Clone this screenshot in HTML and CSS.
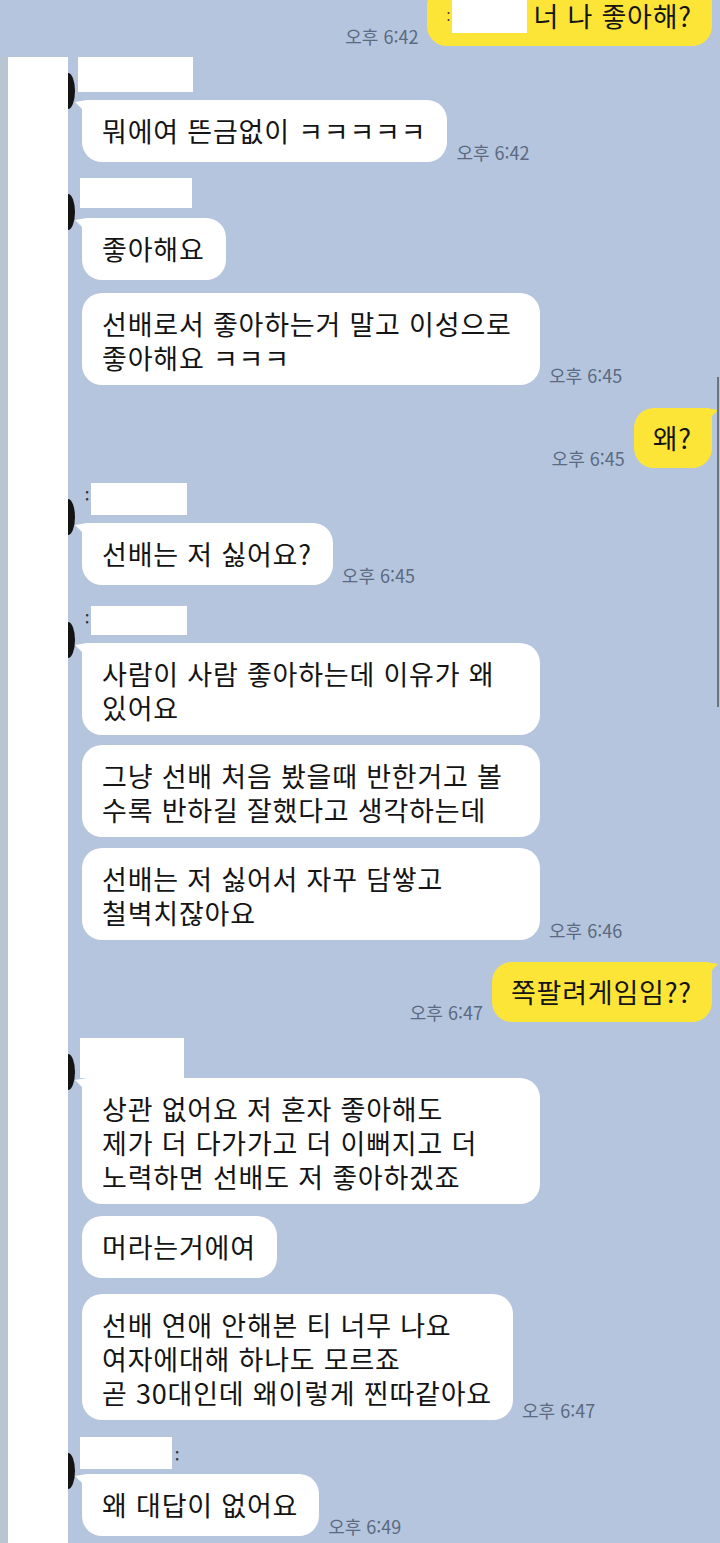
FILE: index.html
```html
<!DOCTYPE html>
<html lang="ko">
<head>
<meta charset="utf-8">
<title>chat</title>
<link rel="stylesheet" href="styles.css">
</head>
<body>
<div class="screen">
  <div class="row right top">
    <span class="time">오후 6:42</span>
    <div class="bubble me tail-r"><span class="ydots">:</span><span class="censor"></span>너 나 좋아해?</div>
  </div>

  <div class="chat">
    <div class="edge"></div>
    <div class="strip"></div>
    <div class="msgs">
      <div class="name n1"><span class="box w115 h35"></span></div>
      <div class="row mt8">
        <div class="bubble tail">뭐에여 뜬금없이 ㅋㅋㅋㅋㅋ</div>
        <span class="time">오후 6:42</span>
      </div>

      <div class="name mt16"><span class="box w112 h30"></span></div>
      <div class="row mt10">
        <div class="bubble tail">좋아해요</div>
      </div>
      <div class="row mt13">
        <div class="bubble wide">선배로서 좋아하는거 말고 이성으로<br>좋아해요 ㅋㅋㅋ</div>
        <span class="time">오후 6:45</span>
      </div>

      <div class="row right mt23">
        <span class="time">오후 6:45</span>
        <div class="bubble me tail-r">왜?</div>
      </div>

      <div class="name mt15"><span class="dots">:</span><span class="box w96 h32"></span></div>
      <div class="row mt8">
        <div class="bubble tail">선배는 저 싫어요?</div>
        <span class="time">오후 6:45</span>
      </div>

      <div class="name mt21"><span class="dots">:</span><span class="box w96 h29"></span></div>
      <div class="row mt8">
        <div class="bubble tail wide">사람이 사람 좋아하는데 이유가 왜<br>있어요</div>
      </div>
      <div class="row mt10">
        <div class="bubble wide">그냥 선배 처음 봤을때 반한거고 볼<br>수록 반하길 잘했다고 생각하는데</div>
      </div>
      <div class="row mt11">
        <div class="bubble wide">선배는 저 싫어서 자꾸 담쌓고<br>철벽치잖아요</div>
        <span class="time">오후 6:46</span>
      </div>

      <div class="row right mt22">
        <span class="time">오후 6:47</span>
        <div class="bubble me tail-r">쪽팔려게임임??</div>
      </div>

      <div class="name mt16"><span class="box w104 h40"></span></div>
      <div class="row">
        <div class="bubble tail wide">상관 없어요 저 혼자 좋아해도<br>제가 더 다가가고 더 이뻐지고 더<br>노력하면 선배도 저 좋아하겠죠</div>
      </div>
      <div class="row mt12">
        <div class="bubble">머라는거에여</div>
      </div>
      <div class="row mt16">
        <div class="bubble">선배 연애 안해본 티 너무 나요<br>여자에대해 하나도 모르죠<br>곧 30대인데 왜이렇게 찐따같아요</div>
        <span class="time">오후 6:47</span>
      </div>

      <div class="name mt17"><span class="box w92 h32"></span><span class="rdots">:</span></div>
      <div class="row mt5">
        <div class="bubble tail">왜 대답이 없어요</div>
        <span class="time">오후 6:49</span>
      </div>
    </div>
  </div>

  <div class="scrollbar"></div>
</div>
</body>
</html>
```

FILE: styles.css
```css
html, body {
  margin: 0;
  padding: 0;
  background: #b5c5de;
}

.screen {
  position: relative;
  width: 720px;
  height: 1543px;
  overflow: hidden;
  background: #b5c5de;
  font-family: "Noto Sans CJK KR", "Noto Sans", sans-serif;
}

.row {
  display: flex;
  align-items: flex-end;
  gap: 9px;
}

.row.right {
  justify-content: flex-end;
  align-self: stretch;
}

.row.top {
  margin-top: -14px;
  padding-right: 8px;
}

.bubble {
  position: relative;
  box-sizing: border-box;
  min-height: 62px;
  padding: 14px 21px 10px 20px;
  border-radius: 20px;
  background: #ffffff;
  color: #141414;
  font-size: 27px;
  line-height: 34px;
  letter-spacing: 0.8px;
  white-space: nowrap;
}

.bubble.wide {
  width: 458px;
}

.bubble.tail {
  border-top-left-radius: 6px;
}

.bubble.tail::before {
  content: "";
  position: absolute;
  left: -7px;
  top: 0;
  width: 12px;
  height: 14px;
  background: #ffffff;
  clip-path: polygon(0 2px, 100% 0, 100% 100%);
}

.bubble.me {
  min-height: 60px;
  padding: 13px 20px 12px 19px;
  background: #fde538;
}

.bubble.tail-r {
  border-top-right-radius: 6px;
}

.bubble.tail-r::after {
  content: "";
  position: absolute;
  right: -6px;
  top: 0;
  width: 12px;
  height: 14px;
  background: #fde538;
  clip-path: polygon(0 0, 100% 2px, 0 100%);
}

.ydots {
  display: inline-block;
  width: 6px;
  font-size: 14px;
  line-height: 34px;
  color: #444;
  vertical-align: top;
}

.censor {
  display: inline-block;
  width: 75px;
  height: 34px;
  margin-right: 6px;
  background: #ffffff;
  vertical-align: top;
}

.time {
  font-size: 18px;
  line-height: 20px;
  color: #5b6a80;
  white-space: nowrap;
}

.chat {
  display: flex;
  margin-top: 11px;
  min-height: 1500px;
}

.edge {
  width: 8px;
  background: #b9c6d2;
}

.strip {
  width: 60px;
  background: #ffffff;
}

.msgs {
  flex: 1;
  display: flex;
  flex-direction: column;
  align-items: flex-start;
  padding: 0 8px 0 14px;
}

.name {
  position: relative;
  display: flex;
  align-items: flex-start;
  margin-left: -2px;
}

.name.n1 {
  margin-left: -4px;
}

.name::before {
  content: "";
  position: absolute;
  left: -12px;
  top: 16px;
  width: 7px;
  height: 36px;
  background: #141414;
  border-radius: 0 7px 7px 0 / 0 18px 18px 0;
}

.name.n1::before {
  left: -10px;
}

.box {
  display: block;
  background: #ffffff;
}

.dots {
  font-size: 13px;
  line-height: 13px;
  color: #333;
  margin: 6px 2px 0 5px;
  font-weight: 700;
}

.rdots {
  font-size: 13px;
  line-height: 13px;
  color: #333;
  margin: 12px 0 0 3px;
  font-weight: 700;
}

.w92 { width: 92px; }
.w96 { width: 96px; }
.w104 { width: 104px; }
.w112 { width: 112px; }
.w115 { width: 115px; }

.h29 { height: 29px; }
.h30 { height: 30px; }
.h32 { height: 32px; }
.h35 { height: 35px; }
.h40 { height: 40px; }

.mt5 { margin-top: 5px; }
.mt8 { margin-top: 8px; }
.mt10 { margin-top: 10px; }
.mt11 { margin-top: 11px; }
.mt12 { margin-top: 12px; }
.mt13 { margin-top: 13px; }
.mt15 { margin-top: 15px; }
.mt16 { margin-top: 16px; }
.mt17 { margin-top: 17px; }
.mt21 { margin-top: 21px; }
.mt22 { margin-top: 22px; }
.mt23 { margin-top: 23px; }

.scrollbar {
  position: absolute;
  right: 1px;
  top: 377px;
  width: 2px;
  height: 330px;
  background: #6f757e;
}
```
